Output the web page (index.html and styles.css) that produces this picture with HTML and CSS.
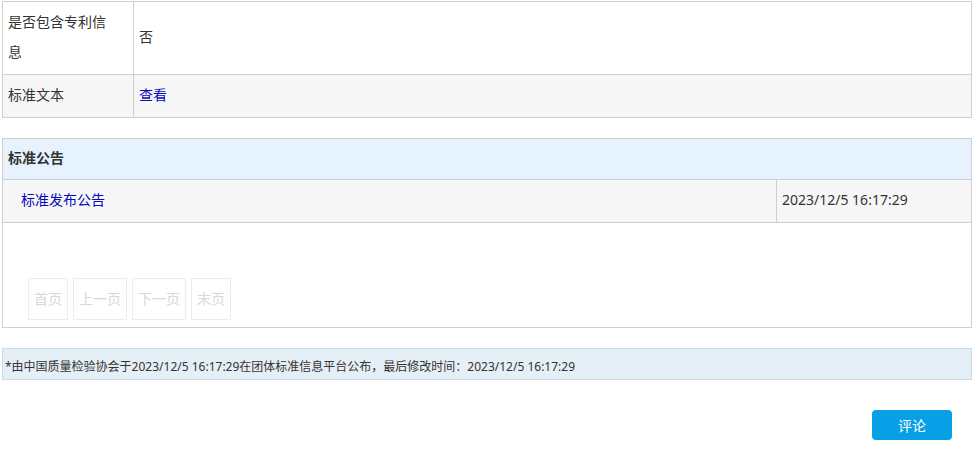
FILE: index.html
```html
<!DOCTYPE html>
<html lang="zh-CN">
<head>
<meta charset="utf-8">
<title>标准公告</title>
<link rel="stylesheet" href="styles.css">
</head>
<body>
<div class="page">
  <table class="info">
    <tr>
      <td class="label">是否包含专利信息</td>
      <td class="value">否</td>
    </tr>
    <tr class="alt">
      <td class="label">标准文本</td>
      <td class="value"><a class="link" href="#">查看</a></td>
    </tr>
  </table>

  <section class="panel">
    <div class="panel-head">标准公告</div>
    <table class="notice">
      <tr>
        <td class="name"><a class="link" href="#">标准发布公告</a></td>
        <td class="date">2023/12/5 16:17:29</td>
      </tr>
    </table>
    <div class="pager">
      <span class="pg">首页</span>
      <span class="pg">上一页</span>
      <span class="pg">下一页</span>
      <span class="pg">末页</span>
    </div>
  </section>

  <div class="note">*由中国质量检验协会于2023/12/5 16:17:29在团体标准信息平台公布，最后修改时间：2023/12/5 16:17:29</div>

  <div class="actions">
    <button class="btn" type="button">评论</button>
  </div>
</div>
</body>
</html>
```

FILE: styles.css
```css
html, body {
  margin: 0;
  padding: 0;
  background: #fff;
}

body {
  font-family: "Noto Sans", "Noto Sans CJK SC", sans-serif;
  font-size: 14px;
  color: #333;
}

.page {
  padding: 1px 1px 0 2px;
}

.link {
  color: #0a0ab8;
  text-decoration: none;
}

.info {
  width: 100%;
  border-collapse: collapse;
}

.info td {
  border: 1px solid #cfcfcf;
  line-height: 30px;
  padding: 5px 5px 7px;
  vertical-align: middle;
}

.info td.label {
  width: 105px;
  padding-right: 20px;
}

.info tr.alt td {
  background: #f6f6f6;
}

.panel {
  margin-top: 20px;
  border: 1px solid #cfcfcf;
}

.panel-head {
  background: #e6f2fd;
  border-bottom: 1px solid #cfcfcf;
  line-height: 38px;
  padding: 0 0 2px 5px;
  font-weight: bold;
}

.notice {
  width: 100%;
  border-collapse: collapse;
}

.notice td {
  background: #f6f6f6;
  border-bottom: 1px solid #cfcfcf;
  line-height: 30px;
  padding: 5px 0 7px;
}

.notice td.name {
  padding-left: 18px;
}

.notice td.date {
  width: 189px;
  padding-left: 5px;
  border-left: 1px solid #cfcfcf;
}

.pager {
  display: flex;
  gap: 5px;
  padding: 55px 0 7px 25px;
}

.pg {
  border: 1px solid #ececec;
  padding: 0 5px;
  line-height: 40px;
  color: #d8d8d8;
}

.note {
  margin-top: 20px;
  background: #e5eff6;
  border: 1px solid #c8dae6;
  font-size: 12px;
  line-height: 25px;
  padding: 5px 0 0 2px;
  color: #333;
}

.actions {
  display: flex;
  justify-content: flex-end;
  margin-top: 30px;
  padding-right: 20px;
}

.btn {
  width: 80px;
  height: 30px;
  border: 0;
  border-radius: 4px;
  background: #079fe6;
  color: #fff;
  font-family: "Noto Sans", "Noto Sans CJK SC", sans-serif;
  font-size: 14px;
  padding: 0;
  cursor: pointer;
}
```
